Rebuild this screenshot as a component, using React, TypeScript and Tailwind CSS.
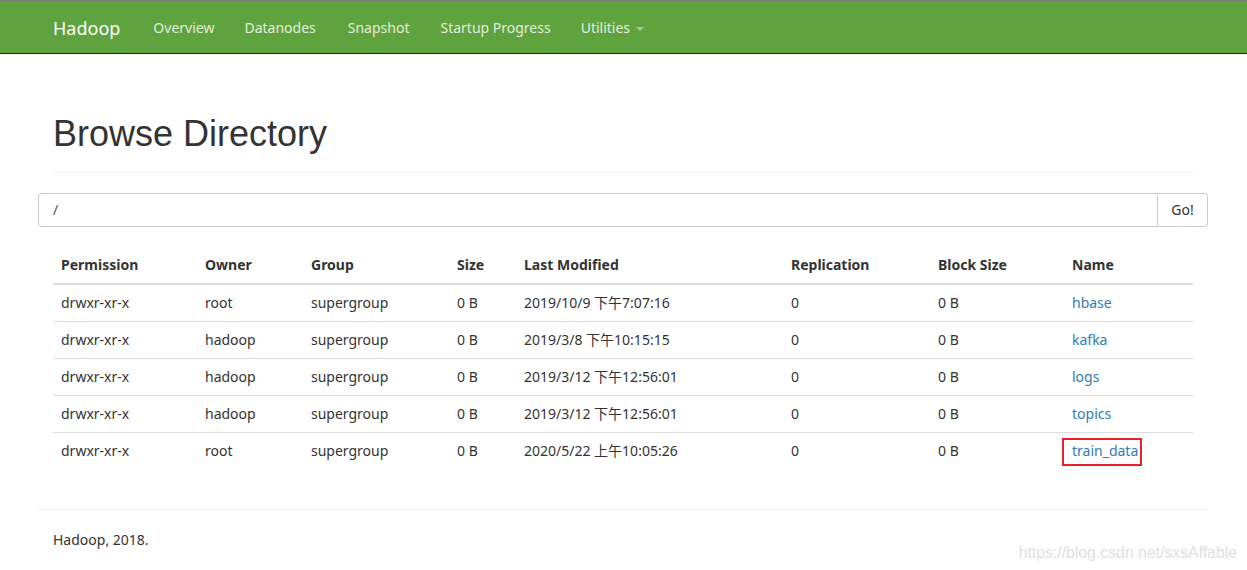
import React from 'react';

const rows = [
  { perm: 'drwxr-xr-x', owner: 'root', group: 'supergroup', size: '0 B', modified: '2019/10/9 下午7:07:16', repl: '0', block: '0 B', name: 'hbase' },
  { perm: 'drwxr-xr-x', owner: 'hadoop', group: 'supergroup', size: '0 B', modified: '2019/3/8 下午10:15:15', repl: '0', block: '0 B', name: 'kafka' },
  { perm: 'drwxr-xr-x', owner: 'hadoop', group: 'supergroup', size: '0 B', modified: '2019/3/12 下午12:56:01', repl: '0', block: '0 B', name: 'logs' },
  { perm: 'drwxr-xr-x', owner: 'hadoop', group: 'supergroup', size: '0 B', modified: '2019/3/12 下午12:56:01', repl: '0', block: '0 B', name: 'topics' },
  { perm: 'drwxr-xr-x', owner: 'root', group: 'supergroup', size: '0 B', modified: '2020/5/22 上午10:05:26', repl: '0', block: '0 B', name: 'train_data' },
];

const headers = ['Permission', 'Owner', 'Group', 'Size', 'Last Modified', 'Replication', 'Block Size', 'Name'];
const colWidths = ['w-[144px]', 'w-[106px]', 'w-[146px]', 'w-[67px]', 'w-[267px]', 'w-[147px]', 'w-[134px]', 'w-[129px]'];

export default function App() {
  return (
    <div className="relative h-[570px] overflow-hidden bg-white text-[14px] leading-[20px] text-[#333] font-['Noto_Sans','Noto_Sans_CJK_SC',sans-serif]">
      {/* Navbar */}
      <nav className="h-[54px] border-t-2 border-t-[#7b7b7b] border-b border-b-[#1f1f1f] bg-[#5fa33e]">
        <div className="ml-[38px] flex h-full w-[1170px] items-center px-[15px]">
          <span className="pr-[33px] text-[18px] text-white">Hadoop</span>
          <span className="pr-[30px] text-[#e4ecdf]">Overview</span>
          <span className="pr-[32px] text-[#e4ecdf]">Datanodes</span>
          <span className="pr-[31px] text-[#e4ecdf]">Snapshot</span>
          <span className="pr-[30px] text-[#e4ecdf]">Startup Progress</span>
          <span className="flex items-center text-[#e4ecdf]">
            Utilities
            <span className="ml-[6px] mt-[2px] h-0 w-0 border-x-[4px] border-t-[4px] border-x-transparent border-t-[#a9c99a]" />
          </span>
        </div>
      </nav>

      <div className="ml-[38px] w-[1170px]">
        {/* Page header */}
        <div className="mx-[15px] mt-[60px] border-b border-[#eee] pb-[18px]">
          <h1 className="font-['Liberation_Sans',Arial,sans-serif] text-[36px] leading-[40px] text-[#333]">
            Browse Directory
          </h1>
        </div>

        {/* Path input */}
        <div className="mt-[20px] flex h-[34px]">
          <div className="flex flex-1 items-center rounded-l-[4px] border border-[#ccc] px-[14px] text-[#555]">/</div>
          <button className="w-[50px] rounded-r-[4px] border border-l-0 border-[#ccc] bg-white text-[#333]">Go!</button>
        </div>

        {/* Listing */}
        <table className="mx-[15px] mt-[20px] w-[1140px] table-fixed border-collapse">
          <colgroup>
            {colWidths.map((w, i) => (
              <col key={i} className={w} />
            ))}
          </colgroup>
          <thead>
            <tr>
              {headers.map((h) => (
                <th key={h} className="border-b-2 border-[#ddd] px-[8px] py-[8px] text-left font-bold">
                  {h}
                </th>
              ))}
            </tr>
          </thead>
          <tbody>
            {rows.map((r, i) => (
              <tr key={i}>
                <td className={`px-[8px] py-[8px] ${i > 0 ? 'border-t border-[#ddd]' : ''}`}>{r.perm}</td>
                <td className={`px-[8px] py-[8px] ${i > 0 ? 'border-t border-[#ddd]' : ''}`}>{r.owner}</td>
                <td className={`px-[8px] py-[8px] ${i > 0 ? 'border-t border-[#ddd]' : ''}`}>{r.group}</td>
                <td className={`px-[8px] py-[8px] ${i > 0 ? 'border-t border-[#ddd]' : ''}`}>{r.size}</td>
                <td className={`whitespace-nowrap px-[8px] py-[8px] ${i > 0 ? 'border-t border-[#ddd]' : ''}`}>{r.modified}</td>
                <td className={`px-[8px] py-[8px] ${i > 0 ? 'border-t border-[#ddd]' : ''}`}>{r.repl}</td>
                <td className={`px-[8px] py-[8px] ${i > 0 ? 'border-t border-[#ddd]' : ''}`}>{r.block}</td>
                <td className={`px-[8px] py-[8px] ${i > 0 ? 'border-t border-[#ddd]' : ''}`}>
                  <span className="relative inline-block text-[#337ab7]">
                    {r.name}
                    {r.name === 'train_data' && (
                      <span className="absolute -bottom-[5px] -left-[10px] -right-[4px] -top-[3px] border-2 border-[#e8202a]" />
                    )}
                  </span>
                </td>
              </tr>
            ))}
          </tbody>
        </table>

        {/* Footer */}
        <div className="mt-[40px] border-t border-[#eee] px-[15px] pt-[20px]">Hadoop, 2018.</div>
      </div>

      {/* CSDN watermark */}
      <div className="absolute bottom-[7px] right-[10px] font-['Liberation_Sans',Arial,sans-serif] text-[15.8px] text-[#e0e0e0]">
        https://blog.csdn.net/sxsAffable
      </div>
    </div>
  );
}
